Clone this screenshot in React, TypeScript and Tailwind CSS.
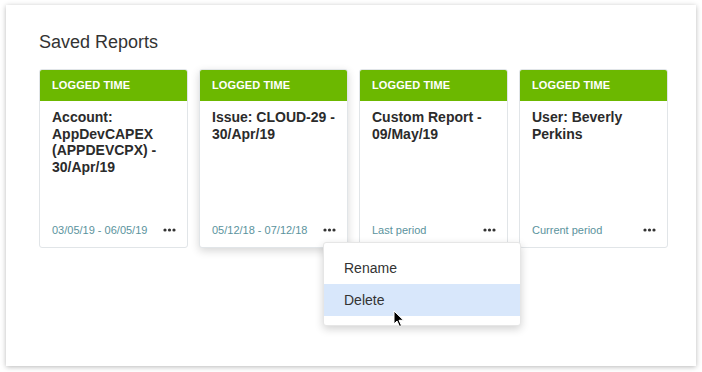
import React from 'react';

type Report = {
    title: string;
    period: string;
    raised?: boolean;
};

const reports: Report[] = [
    { title: 'Account: AppDevCAPEX (APPDEVCPX) - 30/Apr/19', period: '03/05/19 - 06/05/19' },
    { title: 'Issue: CLOUD-29 - 30/Apr/19', period: '05/12/18 - 07/12/18', raised: true },
    { title: 'Custom Report - 09/May/19', period: 'Last period' },
    { title: 'User: Beverly Perkins', period: 'Current period' },
];

const Dots: React.FC = () => (
    <svg width="13" height="4" viewBox="0 0 13 4" className="block">
        <circle cx="2" cy="2" r="1.6" fill="#333" />
        <circle cx="6.5" cy="2" r="1.6" fill="#333" />
        <circle cx="11" cy="2" r="1.6" fill="#333" />
    </svg>
);

const ReportCard: React.FC<{ report: Report }> = ({ report }) => (
    <div
        className={`w-[149px] h-[179px] flex flex-col bg-white border border-[#e1e5e8] rounded-[3px] overflow-hidden ${
            report.raised ? 'shadow-[0_3px_8px_rgba(0,0,0,0.16)]' : ''
        }`}
    >
        <div className="h-[31px] shrink-0 bg-[#6cb800] flex items-center pl-[12px] text-[11px] font-bold text-white tracking-[0.1px]">
            LOGGED TIME
        </div>
        <div className="flex-1 px-[12px] pt-[8px] text-[14px] leading-[16.5px] font-bold text-[#2b2b2b]">
            {report.title}
        </div>
        <div className="h-[34px] shrink-0 flex items-center justify-between pl-[12px] pr-[11px]">
            <span className="text-[11px] text-[#5b939d]">{report.period}</span>
            <Dots />
        </div>
    </div>
);

export default function App() {
    return (
        <div
            className="w-[702px] h-[372px] bg-white pt-[5px] pl-[6px] relative"
            style={{ fontFamily: '"Liberation Sans", Arial, sans-serif' }}
        >
            <div className="w-[690px] h-[361px] bg-white shadow-[0_1px_5px_rgba(0,0,0,0.28)] pl-[33px] pt-[26px]">
                <h1 className="text-[18px] leading-[22px] text-[#333] font-normal">Saved Reports</h1>
                <div className="mt-[16px] flex gap-[11px]">
                    {reports.map(r => (
                        <ReportCard key={r.title} report={r} />
                    ))}
                </div>
            </div>

            {/* context menu for the second card */}
            <div className="absolute left-[323px] top-[242px] w-[198px] h-[84px] bg-white rounded-[3px] border border-[#e6e6e6] shadow-[0_3px_8px_rgba(0,0,0,0.18)] pt-[9px] text-[14px] text-[#333]">
                <div className="h-[32px] flex items-center pl-[20px]">Rename</div>
                <div className="h-[32px] flex items-center pl-[20px] bg-[#d8e7fb]">Delete</div>
            </div>

            {/* mouse pointer */}
            <svg className="absolute left-[393px] top-[310px]" width="12" height="18" viewBox="0 0 12 18">
                <path d="M1 1 L1 14 L4 11 L6.5 16.5 L8.5 15.6 L6 10.3 L10.5 10.3 Z" fill="#000" stroke="#fff" strokeWidth="1" strokeLinejoin="round" />
            </svg>
        </div>
    );
}
